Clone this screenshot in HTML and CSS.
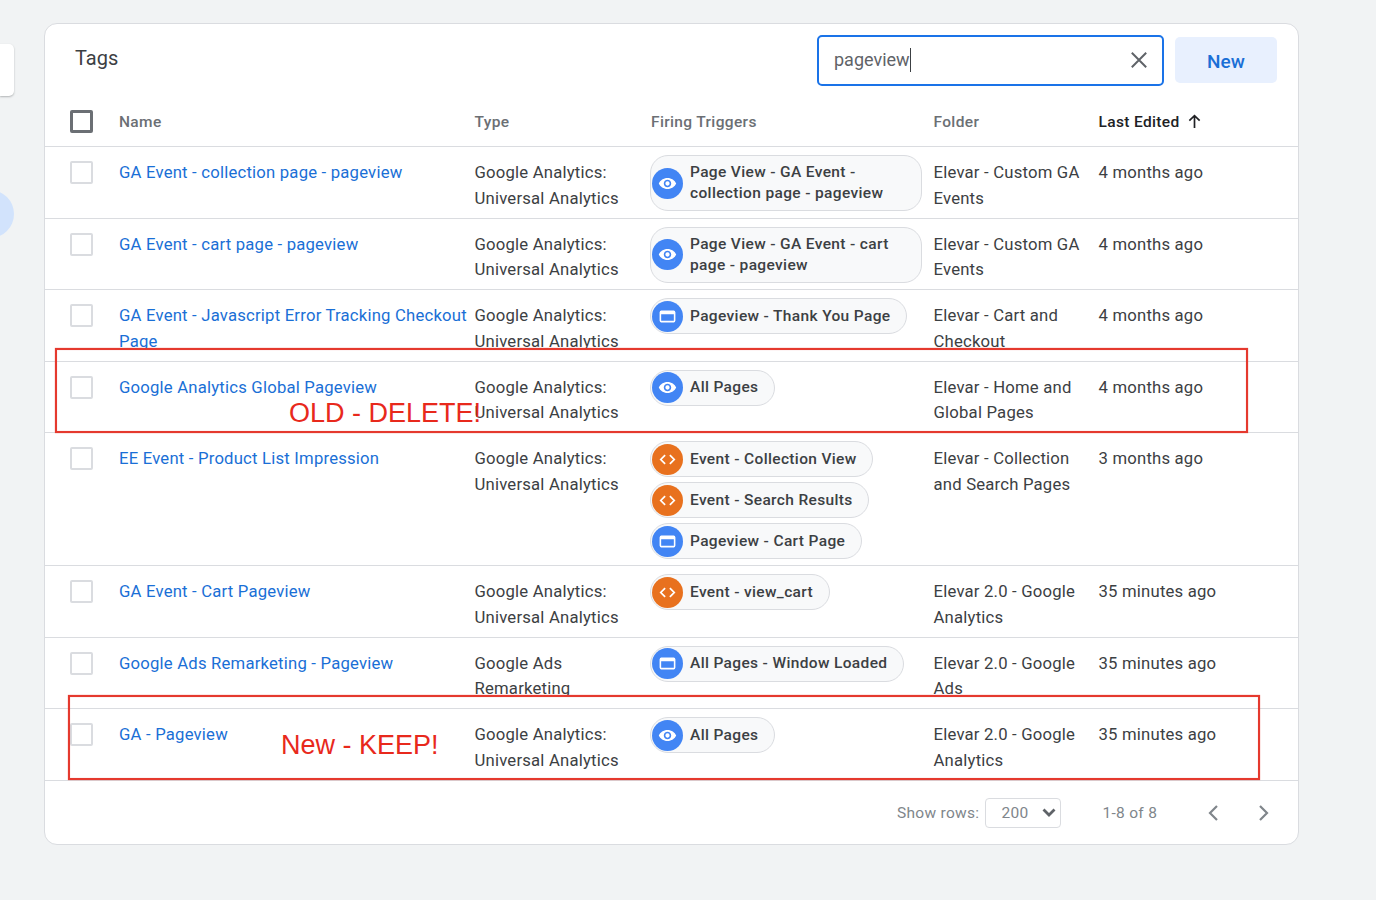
FILE: index.html
```html
<!DOCTYPE html>
<html lang="en">
<head>
<meta charset="utf-8">
<title>Tags</title>
<link rel="stylesheet" href="styles.css">
</head>
<body>
<svg class="defs" width="0" height="0" aria-hidden="true">
  <symbol id="eye" viewBox="0 0 24 24"><path fill="#fff" d="M12 5C7 5 2.7 8.1 1 12c1.7 3.9 6 7 11 7s9.300-3.100 11-7c-1.700-3.900-6-7-11-7zm0 11.700c-2.600 0-4.700-2.100-4.700-4.700S9.400 7.300 12 7.300s4.700 2.100 4.700 4.700-2.100 4.700-4.700 4.700zm0-7.400a2.700 2.700 0 1 0 0 5.400 2.700 2.700 0 0 0 0-5.400z"/></symbol>
  <symbol id="win" viewBox="0 0 24 24"><path fill="#fff" d="M4 4.500h16a2 2 0 0 1 2 2v11a2 2 0 0 1-2 2H4a2 2 0 0 1-2-2v-11a2 2 0 0 1 2-2zm0 4.500v8.500h16V9H4z"/></symbol>
  <symbol id="code" viewBox="0 0 24 24"><path fill="none" stroke="#fff" stroke-width="2.200" d="M9 6.500 3.500 12 9 17.500M15 6.500l5.500 5.500-5.500 5.500"/></symbol>
</svg>

<aside class="rail">
  <div class="rail-card"></div>
  <div class="rail-dot"></div>
</aside>

<main class="card">
  <header class="top">
    <h1 class="title">Tags</h1>
    <div class="search">
      <span class="query">pageview</span><span class="caret"></span>
      <svg class="clear" viewBox="0 0 20 20"><path fill="none" stroke="#5f6368" stroke-width="2.200" d="M2 2l16 16M18 2 2 18"/></svg>
    </div>
    <button class="new">New</button>
  </header>

  <div class="row head">
    <span class="box strong"></span>
    <span>Name</span>
    <span>Type</span>
    <span>Firing Triggers</span>
    <span>Folder</span>
    <span class="sorted">Last Edited
      <svg class="arrow" viewBox="0 0 16 16"><path fill="none" stroke="#202124" stroke-width="1.800" d="M8 15V2M2.500 7 8 1.800 13.500 7"/></svg>
    </span>
  </div>

  <div class="row">
    <span class="box"></span>
    <a class="name">GA Event - collection page - pageview</a>
    <span class="cell">Google Analytics: Universal Analytics</span>
    <div class="chips"><span class="chip tall"><svg class="ic blue"><use href="#eye"/></svg><span class="chip-text">Page View - GA Event - collection page - pageview</span></span></div>
    <span class="cell">Elevar - Custom GA Events</span>
    <span class="cell">4 months ago</span>
  </div>

  <div class="row">
    <span class="box"></span>
    <a class="name">GA Event - cart page - pageview</a>
    <span class="cell">Google Analytics: Universal Analytics</span>
    <div class="chips"><span class="chip tall"><svg class="ic blue"><use href="#eye"/></svg><span class="chip-text">Page View - GA Event - cart page - pageview</span></span></div>
    <span class="cell">Elevar - Custom GA Events</span>
    <span class="cell">4 months ago</span>
  </div>

  <div class="row">
    <span class="box"></span>
    <a class="name">GA Event - Javascript Error Tracking Checkout Page</a>
    <span class="cell">Google Analytics: Universal Analytics</span>
    <div class="chips"><span class="chip"><svg class="ic blue"><use href="#win"/></svg><span class="chip-text">Pageview - Thank You Page</span></span></div>
    <span class="cell">Elevar - Cart and Checkout</span>
    <span class="cell">4 months ago</span>
  </div>

  <div class="row">
    <span class="box"></span>
    <a class="name">Google Analytics Global Pageview</a>
    <span class="cell">Google Analytics: Universal Analytics</span>
    <div class="chips"><span class="chip"><svg class="ic blue"><use href="#eye"/></svg><span class="chip-text">All Pages</span></span></div>
    <span class="cell">Elevar - Home and Global Pages</span>
    <span class="cell">4 months ago</span>
  </div>

  <div class="row big">
    <span class="box"></span>
    <a class="name">EE Event - Product List Impression</a>
    <span class="cell">Google Analytics: Universal Analytics</span>
    <div class="chips">
      <span class="chip"><svg class="ic orange"><use href="#code"/></svg><span class="chip-text">Event - Collection View</span></span>
      <span class="chip"><svg class="ic orange"><use href="#code"/></svg><span class="chip-text">Event - Search Results</span></span>
      <span class="chip"><svg class="ic blue"><use href="#win"/></svg><span class="chip-text">Pageview - Cart Page</span></span>
    </div>
    <span class="cell">Elevar - Collection and Search Pages</span>
    <span class="cell">3 months ago</span>
  </div>

  <div class="row">
    <span class="box"></span>
    <a class="name">GA Event - Cart Pageview</a>
    <span class="cell">Google Analytics: Universal Analytics</span>
    <div class="chips"><span class="chip"><svg class="ic orange"><use href="#code"/></svg><span class="chip-text">Event - view_cart</span></span></div>
    <span class="cell">Elevar 2.0 - Google Analytics</span>
    <span class="cell">35 minutes ago</span>
  </div>

  <div class="row">
    <span class="box"></span>
    <a class="name">Google Ads Remarketing - Pageview</a>
    <span class="cell">Google Ads Remarketing</span>
    <div class="chips"><span class="chip"><svg class="ic blue"><use href="#win"/></svg><span class="chip-text">All Pages - Window Loaded</span></span></div>
    <span class="cell">Elevar 2.0 - Google Ads</span>
    <span class="cell">35 minutes ago</span>
  </div>

  <div class="row">
    <span class="box"></span>
    <a class="name">GA - Pageview</a>
    <span class="cell">Google Analytics: Universal Analytics</span>
    <div class="chips"><span class="chip"><svg class="ic blue"><use href="#eye"/></svg><span class="chip-text">All Pages</span></span></div>
    <span class="cell">Elevar 2.0 - Google Analytics</span>
    <span class="cell">35 minutes ago</span>
  </div>

  <footer class="foot">
    <span class="foot-label">Show rows:</span>
    <div class="select"><span>200</span><svg class="select-arrow" viewBox="0 0 14 9"><path fill="none" stroke="#5f6368" stroke-width="2.800" d="M1.500 1.500 7 7l5.500-5.500"/></svg></div>
    <span class="count">1-8 of 8</span>
    <svg class="pager first" viewBox="0 0 12 18"><path fill="none" stroke="#80868b" stroke-width="2.200" d="M10 2 3 9l7 7"/></svg>
    <svg class="pager" viewBox="0 0 12 18"><path fill="none" stroke="#80868b" stroke-width="2.200" d="M2 2l7 7-7 7"/></svg>
  </footer>
</main>

<div class="mark old"><span class="mark-text old-text">OLD - DELETE!</span></div>
<div class="mark keep"><span class="mark-text keep-text">New - KEEP!</span></div>
</body>
</html>
```
FILE: styles.css
```css
* { box-sizing: border-box; }
html, body { margin: 0; height: 900px; overflow: hidden; }
body {
  position: relative;
  display: flex;
  align-items: flex-start;
  background: #f1f3f4;
  font-family: Roboto, "Liberation Sans", sans-serif;
  font-size: 16.7px;
  color: #3c4043;
}
.defs { position: absolute; }

.rail { flex: 0 0 44px; padding-top: 44px; }
.rail-card {
  width: 14px; height: 52px;
  background: #fff;
  border-radius: 0 5px 5px 0;
  box-shadow: 0 1px 2px rgba(60,64,67,.35);
}
.rail-dot {
  width: 48px; height: 48px;
  margin: 94px 0 0 -34px;
  border-radius: 50%;
  background: #d2e3fc;
}

.card {
  width: 1255px;
  height: 822px;
  margin-top: 23px;
  background: #fff;
  border: 1px solid #dadce0;
  border-radius: 13px;
}

.top {
  display: flex;
  align-items: flex-start;
  height: 72px;
  padding: 11px 21px 0 30px;
}
.title {
  margin: 10px auto 0 0;
  font-size: 20px;
  font-weight: 400;
  line-height: 26px;
  color: #3c4043;
}
.search {
  display: flex;
  align-items: center;
  width: 347px;
  height: 51px;
  padding: 0 14px 2px 15px;
  border: 2px solid #1a73e8;
  border-radius: 5px;
  font-size: 18px;
  color: #5f6368;
}
.caret { width: 1px; height: 24px; background: #3c4043; }
.clear { width: 18px; height: 18px; margin-left: auto; }
.new {
  width: 102px;
  height: 46px;
  margin: 2px 0 0 11px;
  padding: 2px 0 0;
  border: 0;
  border-radius: 5px;
  background: #e8f0fe;
  color: #1a6fd6;
  font: 500 19px Roboto, sans-serif;
}

.row {
  display: grid;
  grid-template-columns: 74px 355.5px 176.5px 282.5px 165px 1fr;
  align-items: start;
  height: 71.5px;
  border-bottom: 1px solid #dadce0;
  line-height: 25.5px;
  letter-spacing: .2px;
}
.row.big { height: 133px; }
.row.head {
  height: 51px;
  padding-top: 3px;
  align-items: center;
  font-size: 15.5px;
  font-weight: 500;
  color: #6b6f74;
  letter-spacing: .35px;
}
.sorted { display: flex; align-items: center; gap: 7px; color: #202124; }
.arrow { width: 15px; height: 15px; margin-top: -2px; }

.box {
  display: block;
  width: 23px; height: 23px;
  margin: 14px 0 0 25px;
  border: 2px solid #dadce0;
  border-radius: 2px;
}
.box.strong { margin-top: -3px; border: 3px solid #6b6f74; }

.name, .cell { display: block; padding-top: 13px; }
.cell { padding-right: 5px; }
.name { color: #1a6fd6; }

.chips {
  display: flex;
  flex-direction: column;
  align-items: flex-start;
  gap: 5px;
  padding-top: 8px;
  margin-left: -1px;
}
.chip {
  display: flex;
  align-items: center;
  gap: 7px;
  min-height: 36px;
  padding: 1px 15.5px 1px 1px;
  background: #f8f9fa;
  border: 1px solid #dadce0;
  border-radius: 18px;
}
.chip.tall { width: 272px; min-height: 56px; }
.chip-text {
  font-size: 15.5px;
  font-weight: 500;
  line-height: 21px;
  letter-spacing: .35px;
  color: #3c4043;
}
.ic { flex: none; width: 31px; height: 31px; padding: 6px; border-radius: 50%; }
.blue { background: #4285f4; }
.orange { background: #e8711e; }

.foot {
  display: flex;
  align-items: center;
  height: 62px;
  padding: 2px 0 0 852px;
  font-size: 15.5px;
  letter-spacing: .3px;
  color: #80868b;
}
.select {
  display: flex;
  align-items: center;
  justify-content: space-between;
  width: 76px;
  height: 30px;
  margin-left: 6px;
  padding: 0 4px 0 15px;
  border: 1px solid #dadce0;
  border-radius: 4px;
}
.select-arrow { width: 14px; height: 9px; }
.count { margin-left: 41px; }
.pager { width: 12px; height: 18px; margin-left: 39px; }
.pager.first { margin-left: 50px; }

.mark {
  position: absolute;
  border: 2px solid #e5392e;
  box-shadow: 0 0 1px rgba(229,57,46,.7), inset 0 0 1px rgba(229,57,46,.5);
}
.mark-text {
  position: absolute;
  font-family: "Liberation Sans", Arial, sans-serif;
  font-size: 27px;
  line-height: 32px;
  white-space: nowrap;
  color: #e8291c;
}
.old { left: 55px; top: 348px; width: 1193px; height: 85px; }
.old-text { left: 232px; top: 47px; }
.keep { left: 68px; top: 695px; width: 1192px; height: 85px; }
.keep-text { left: 211px; top: 32px; }
```
